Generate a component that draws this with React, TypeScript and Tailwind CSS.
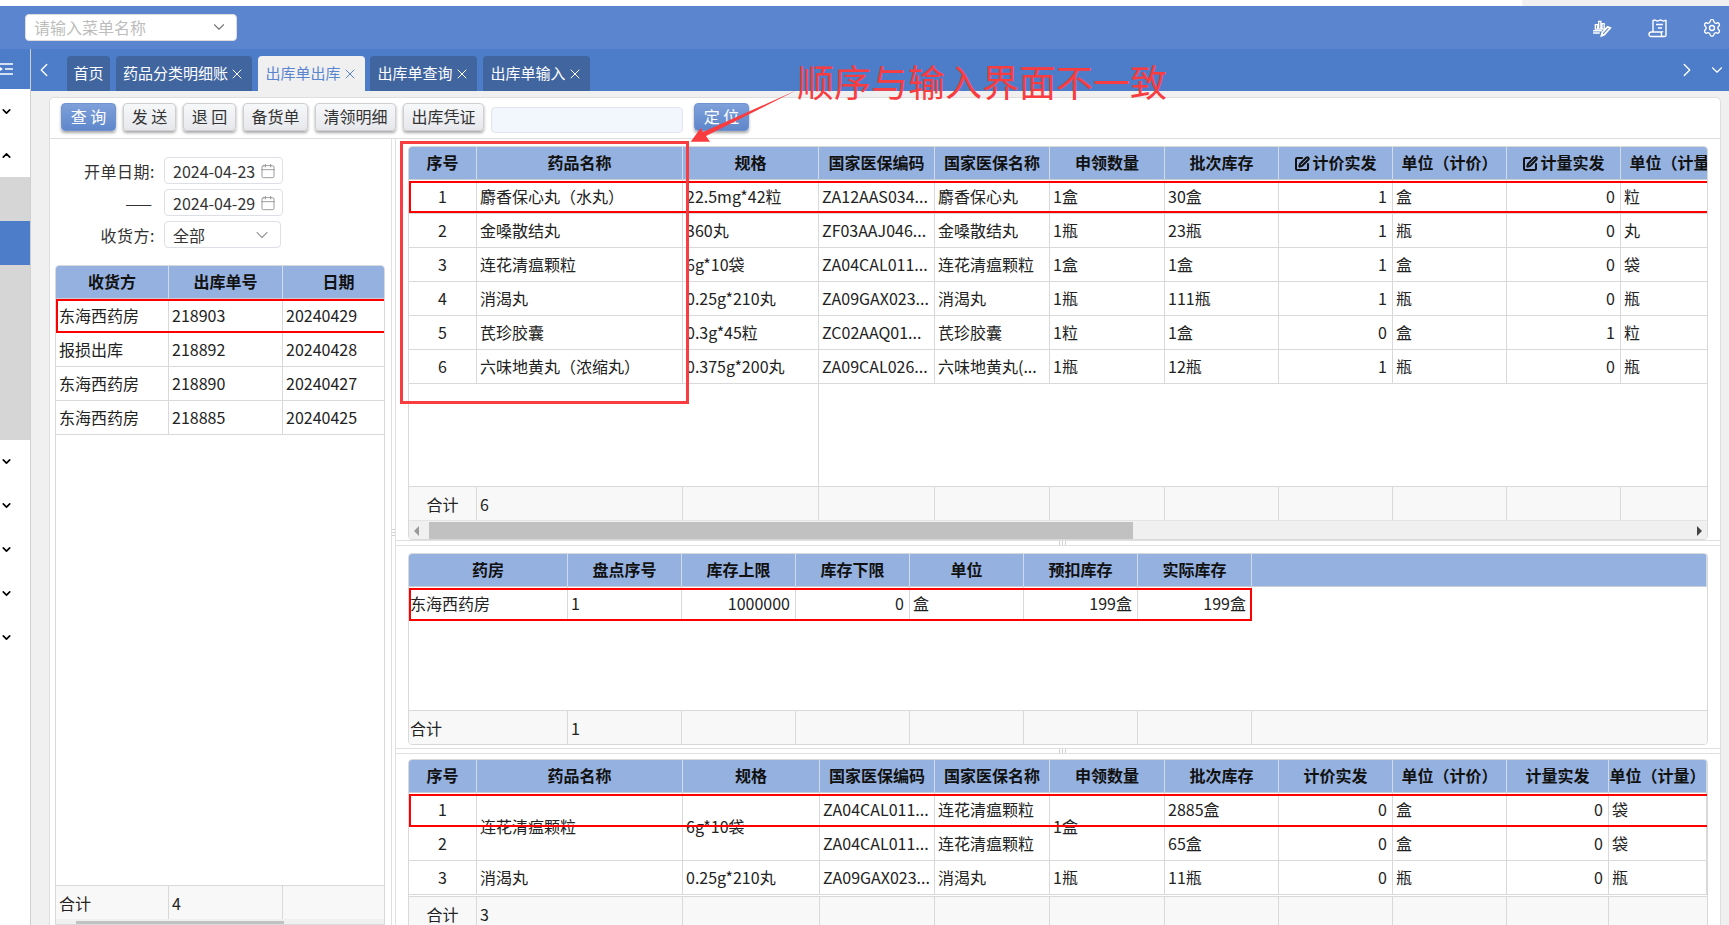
import { Calendar, ChevronDown, ChevronLeft, ChevronRight, ChevronUp, Settings, SquarePen, X } from "lucide-react";

type Col = { w?: number; label: string; align?: "left" | "right" | "center"; edit?: boolean };
type Cell = string | { text: string; span: number } | null;

const alignClass = {
  left: "text-left pl-[3px]",
  right: "text-right pr-[5px]",
  center: "text-center",
};

function Grid(props: { cols: Col[]; rows: Cell[][]; foot: string[]; footAlign?: "left" | "center"; fill?: boolean; tight?: boolean }) {
  const { cols, rows, foot, footAlign = "left", fill, tight } = props;
  const tableW = cols.reduce((sum, c) => sum + (c.w ?? 0), 0);
  const tableStyle = fill ? { width: "100%" } : { width: tableW };

  return (
    <div className="flex h-full min-w-0 flex-col">
      <table className="table-fixed border-separate border-spacing-0" style={tableStyle}>
        <colgroup>
          {cols.map((c, i) => (
            <col key={i} style={c.w ? { width: c.w } : undefined} />
          ))}
        </colgroup>
        <thead>
          <tr>
            {cols.map((c, i) => (
              <th key={i} className="h-[33px] overflow-hidden border-r border-b border-r-[#d5dbe6] border-b-[#c9ced6] bg-[#95b1e0] p-0 pb-[2px] text-center text-[16px] font-bold whitespace-nowrap text-[#111]">
                {c.edit && <SquarePen size={16} strokeWidth={3} className="mr-[2px] inline -translate-y-px" />}
                {c.label}
              </th>
            ))}
          </tr>
        </thead>
        <tbody>
          {rows.map((row, r) => (
            <tr key={r}>
              {row.map((cell, i) => {
                if (cell === null) return null;
                const text = typeof cell === "string" ? cell : cell.text;
                const span = typeof cell === "string" ? 1 : cell.span;
                const isFiller = !cols[i].w && text === "";
                return (
                  <td
                    key={i}
                    rowSpan={span}
                    className={`h-[34px] overflow-hidden p-0 pb-px text-[16px] whitespace-nowrap text-[#222] ${isFiller ? "" : "border-r border-b border-[#d9d9d9]"} ${tight && i === 0 ? "pl-px text-left" : alignClass[cols[i].align ?? "left"]}`}
                  >
                    {text}
                  </td>
                );
              })}
            </tr>
          ))}
        </tbody>
      </table>
      <div className="flex-1" />
      <table className="table-fixed border-separate border-spacing-0" style={tableStyle}>
        <colgroup>
          {cols.map((c, i) => (
            <col key={i} style={c.w ? { width: c.w } : undefined} />
          ))}
        </colgroup>
        <tbody>
          <tr>
            {cols.map((c, i) => (
              <td
                key={i}
                className={`h-[34px] overflow-hidden border-t border-[#d9d9d9] bg-[#f8f8f8] p-0 text-[16px] text-[#222] ${c.w ? "border-r" : ""} ${i === 0 && footAlign === "center" ? "text-center" : tight && i === 0 ? "pl-px text-left" : "pl-[3px] text-left"}`}
              >
                {foot[i]}
              </td>
            ))}
          </tr>
        </tbody>
      </table>
    </div>
  );
}

function Btn({ label, primary, className }: { label: string; primary?: boolean; className: string }) {
  return (
    <button
      className={`h-[28px] shrink-0 rounded-[4px] border pb-[2px] text-[16px] shadow-[0_2px_3px_rgba(0,0,0,0.35)] ${
        primary ? "border-[#6f93cf] bg-linear-to-b from-[#7ea0da] to-[#5f87ca] text-white" : "border-[#cfcfcf] bg-linear-to-b from-[#f7f8fa] to-[#e6e8ec] text-[#333]"
      } ${className}`}
    >
      {label}
    </button>
  );
}

function Tab({ label, active, closable = true, className }: { label: string; active?: boolean; closable?: boolean; className: string }) {
  return (
    <div
      className={`flex h-[35px] shrink-0 items-center justify-center gap-px rounded-t-[4px] pb-[2px] text-[15px] ${
        active ? "bg-[#f0f0f0] text-[#5b85ce]" : "bg-[#41669f] text-white"
      } ${className}`}
    >
      {label}
      {closable && <X size={16} strokeWidth={1.5} className="mt-[2px]" />}
    </div>
  );
}

function HSplit() {
  return (
    <div className="flex h-[6px] justify-center gap-[2px] border-y border-[#e0e0e0] pl-[8px]">
      <span className="h-full w-px bg-[#d0d0d0]" />
      <span className="h-full w-px bg-[#d0d0d0]" />
      <span className="h-full w-px bg-[#d0d0d0]" />
    </div>
  );
}

function SideRow({ up }: { up?: boolean }) {
  return (
    <div className="flex h-[44px] items-center">
      {up ? <ChevronUp size={13} strokeWidth={3} className="text-black" /> : <ChevronDown size={13} strokeWidth={3} className="text-black" />}
    </div>
  );
}

const frozenCols: Col[] = [
  { w: 68, label: "序号", align: "center" },
  { w: 206, label: "药品名称" },
  { w: 136, label: "规格" },
];

const topCols: Col[] = [
  { w: 116, label: "国家医保编码" },
  { w: 115, label: "国家医保名称" },
  { w: 115, label: "申领数量" },
  { w: 114, label: "批次库存" },
  { w: 114, label: "计价实发", align: "right", edit: true },
  { w: 114, label: "单位（计价）" },
  { w: 114, label: "计量实发", align: "right", edit: true },
  { w: 114, label: "单位（计量）" },
];

const frozenRows: Cell[][] = [
  ["1", "麝香保心丸（水丸）", "22.5mg*42粒"],
  ["2", "金嗓散结丸", "360丸"],
  ["3", "连花清瘟颗粒", "6g*10袋"],
  ["4", "消渴丸", "0.25g*210丸"],
  ["5", "芪珍胶囊", "0.3g*45粒"],
  ["6", "六味地黄丸（浓缩丸）", "0.375g*200丸"],
];

const topRows: Cell[][] = [
  ["ZA12AAS034...", "麝香保心丸", "1盒", "30盒", "1", "盒", "0", "粒"],
  ["ZF03AAJ046...", "金嗓散结丸", "1瓶", "23瓶", "1", "瓶", "0", "丸"],
  ["ZA04CAL011...", "连花清瘟颗粒", "1盒", "1盒", "1", "盒", "0", "袋"],
  ["ZA09GAX023...", "消渴丸", "1瓶", "111瓶", "1", "瓶", "0", "瓶"],
  ["ZC02AAQ01...", "芪珍胶囊", "1粒", "1盒", "0", "盒", "1", "粒"],
  ["ZA09CAL026...", "六味地黄丸(...", "1瓶", "12瓶", "1", "瓶", "0", "瓶"],
];

const leftCols: Col[] = [
  { w: 113, label: "收货方" },
  { w: 114, label: "出库单号" },
  { w: 112, label: "日期" },
];

const leftRows: Cell[][] = [
  ["东海西药房", "218903", "20240429"],
  ["报损出库", "218892", "20240428"],
  ["东海西药房", "218890", "20240427"],
  ["东海西药房", "218885", "20240425"],
];

const midCols: Col[] = [
  { w: 159, label: "药房" },
  { w: 114, label: "盘点序号" },
  { w: 114, label: "库存上限", align: "right" },
  { w: 114, label: "库存下限", align: "right" },
  { w: 114, label: "单位" },
  { w: 114, label: "预扣库存", align: "right" },
  { w: 114, label: "实际库存", align: "right" },
  { label: "" },
];

const botCols: Col[] = [
  { w: 68, label: "序号", align: "center" },
  { w: 206, label: "药品名称" },
  { w: 137, label: "规格" },
  { w: 115, label: "国家医保编码" },
  { w: 115, label: "国家医保名称" },
  { w: 115, label: "申领数量" },
  { w: 114, label: "批次库存" },
  { w: 114, label: "计价实发", align: "right" },
  { w: 114, label: "单位（计价）" },
  { w: 102, label: "计量实发", align: "right" },
  { label: "单位（计量）" },
];

const botRows: Cell[][] = [
  ["1", { text: "连花清瘟颗粒", span: 2 }, { text: "6g*10袋", span: 2 }, "ZA04CAL011...", "连花清瘟颗粒", { text: "1盒", span: 2 }, "2885盒", "0", "盒", "0", "袋"],
  ["2", null, null, "ZA04CAL011...", "连花清瘟颗粒", null, "65盒", "0", "盒", "0", "袋"],
  ["3", "消渴丸", "0.25g*210丸", "ZA09GAX023...", "消渴丸", "1瓶", "11瓶", "0", "瓶", "0", "瓶"],
];

export default function App() {
  return (
    <div className="relative flex h-[925px] w-[1729px] flex-col overflow-hidden bg-white font-['Noto_Sans_CJK_SC','Noto_Sans',sans-serif] leading-[22px]">
      {/* window strip */}
      <div className="flex h-[6px] shrink-0 justify-end">
        <div className="w-[207px] bg-[#f0f0f0]" />
      </div>

      {/* header */}
      <div className="flex h-[43px] shrink-0 items-center bg-[#5b85ce] pl-[25px]">
        <div className="flex h-[27px] w-[212px] items-center justify-between rounded-[4px] border border-[#ddd] bg-white px-[8px] pb-[1px] text-[16px] text-[#bdbdbd]">
          请输入菜单名称
          <ChevronDown size={18} strokeWidth={1.5} className="text-[#777]" />
        </div>
        <div className="ml-auto flex items-center gap-[33px] pr-[7px] text-white">
          <svg className="mr-[3px]" width="20" height="20" viewBox="0 0 18 18" fill="none" stroke="currentColor" strokeWidth="1.2">
            <path d="M3 6v4h2V6zM6 3v7h2V3zM9 5v5h2V5zM1 11.5h8M1 13.5h6" />
            <path d="M16.5 9l-5.5 6-2.5 1 .7-2.7L14 8z" strokeWidth="1.6" />
          </svg>
          <svg width="21" height="20" viewBox="0 0 21 20" fill="none" stroke="currentColor" strokeWidth="1.4">
            <path d="M5 14V2.5c1-.7 2-.7 3 0s2 .7 3 0 2-.7 3 0 2 .7 3 0 1 0 1 0V17c0 1-.6 1.5-1.500 1.500H3C1.700 18.500 1 17.500 1 16.500c0-1.500 1-2.500 2.500-2.500H14c-1 1-1 3.500.5 4.500" />
            <path d="M8 6.500h7M10 10h4" />
          </svg>
          <Settings size={20} strokeWidth={1.6} />
        </div>
      </div>

      <div className="flex min-h-0 flex-1">
        {/* sidebar */}
        <div className="flex w-[31px] shrink-0 flex-col border-r border-[#cfcfcf] bg-white">
          <div className="flex h-[40px] shrink-0 items-center bg-[#4d7cc8]">
            <svg width="14" height="14" viewBox="0 0 14 14" stroke="#fff" strokeWidth="1.6">
              <path d="M0 2h13M5 7h8M0 12h13" />
              <path d="M0 5l3 2-3 2z" fill="#fff" stroke="none" />
            </svg>
          </div>
          <SideRow />
          <SideRow up />
          <div className="h-[44px] bg-[#d6d6d6]" />
          <div className="h-[44px] bg-[#4d7cc8]" />
          <div className="h-[175px] bg-[#d6d6d6]" />
          <div className="mt-[-1px]">
            <SideRow />
            <SideRow />
            <SideRow />
            <SideRow />
            <SideRow />
          </div>
        </div>

        <div className="flex min-w-0 flex-1 flex-col">
          {/* tabs */}
          <div className="flex h-[42px] shrink-0 items-end bg-[#4d7cc8] text-white">
            <div className="flex h-full w-[36px] shrink-0 items-center">
              <ChevronLeft size={22} strokeWidth={1.5} className="ml-[2px]" />
            </div>
            <Tab label="首页" closable={false} className="w-[43px]" />
            <Tab label="药品分类明细账" className="ml-[6px] w-[136px]" />
            <Tab label="出库单出库" active className="ml-[6px] w-[107px]" />
            <Tab label="出库单查询" className="ml-[5px] w-[107px]" />
            <Tab label="出库单输入" className="ml-[6px] w-[107px]" />
            <div className="ml-auto flex h-full items-center gap-[10px] pr-[3px]">
              <ChevronRight size={22} strokeWidth={1.5} />
              <ChevronDown size={18} strokeWidth={1.5} />
            </div>
          </div>

          {/* page */}
          <div className="min-h-0 flex-1 bg-[#f0f0f0] pt-[6px] pr-[8px] pl-[18px]">
            <div className="flex h-full flex-col rounded-t-[5px] border border-b-0 border-[#dedede] bg-white">
              {/* toolbar */}
              <div className="flex h-[41px] shrink-0 items-start gap-[7px] border-b border-[#dedede] pt-[5px] pl-[11px]">
                <Btn label="查 询" primary className="w-[55px]" />
                <Btn label="发 送" className="w-[53px]" />
                <Btn label="退 回" className="w-[53px]" />
                <Btn label="备货单" className="w-[65px]" />
                <Btn label="清领明细" className="w-[81px]" />
                <Btn label="出库凭证" className="w-[81px]" />
                <div className="mt-[4px] h-[26px] w-[192px] rounded-[4px] border border-[#e2e6ec] bg-[#f2f7fd]" />
                <Btn label="定 位" primary className="ml-[4px] w-[55px]" />
              </div>

              <div className="flex min-h-0 flex-1">
                {/* left pane */}
                <div className="flex w-[341px] shrink-0 flex-col pr-[6px] pl-[5px]">
                  <div className="flex flex-col gap-[5px] pt-[18px] pb-[17px]">
                    <div className="flex h-[27px] items-center">
                      <span className="w-[100px] text-right text-[16px] tracking-[0.5px] text-[#333]">开单日期:</span>
                      <div className="ml-[9px] flex h-[27px] w-[119px] items-center justify-between rounded-[4px] border border-[#dcdfe6] pr-[6px] pl-[8px] text-[16px] text-[#333]">
                        2024-04-23
                        <Calendar size={16} strokeWidth={1.25} className="text-[#888]" />
                      </div>
                    </div>
                    <div className="flex h-[27px] items-center">
                      <span className="w-[97px] text-right text-[16px] text-[#333]">——</span>
                      <div className="ml-[12px] flex h-[27px] w-[119px] items-center justify-between rounded-[4px] border border-[#dcdfe6] pr-[6px] pl-[8px] text-[16px] text-[#333]">
                        2024-04-29
                        <Calendar size={16} strokeWidth={1.25} className="text-[#888]" />
                      </div>
                    </div>
                    <div className="flex h-[27px] items-center">
                      <span className="w-[100px] text-right text-[16px] tracking-[0.5px] text-[#333]">收货方:</span>
                      <div className="ml-[9px] flex h-[27px] w-[117px] items-center justify-between rounded-[4px] border border-[#dcdfe6] px-[8px] text-[16px] text-[#333]">
                        全部
                        <ChevronDown size={20} strokeWidth={1.25} className="text-[#777]" />
                      </div>
                    </div>
                  </div>

                  <div className="relative flex min-h-0 flex-1 flex-col overflow-hidden rounded-t-[4px] border border-[#d9d9d9]">
                    <div className="min-h-0 flex-1">
                      <Grid cols={leftCols} rows={leftRows} foot={["合计", "4", ""]} />
                    </div>
                    <div className="flex h-[5px] shrink-0 bg-[#f0f0f0] pt-[2px] pl-[20px]">
                      <div className="h-full w-[208px] bg-[#c1c1c1]" />
                    </div>
                    <div className="pointer-events-none absolute top-[33px] right-[-4px] left-0 h-[34px] border-2 border-[#f00]" />
                  </div>
                </div>

                {/* vertical splitter */}
                <div className="flex w-[5px] shrink-0 flex-col justify-center gap-[2px] border-x border-[#e0e0e0]">
                  <span className="h-px w-full bg-[#d0d0d0]" />
                  <span className="h-px w-full bg-[#d0d0d0]" />
                  <span className="h-px w-full bg-[#d0d0d0]" />
                </div>

                {/* right pane */}
                <div className="flex min-w-0 flex-1 flex-col">
                  <div className="px-[12px] pt-[7px]">
                    <div className="relative h-[394px] overflow-hidden rounded-[4px] border border-[#d9d9d9]">
                      <div className="flex h-[373px]">
                        <div className="w-[410px] shrink-0 border-r border-[#d9d9d9]">
                          <Grid cols={frozenCols} rows={frozenRows} foot={["合计", "6", ""]} footAlign="center" />
                        </div>
                        <div className="min-w-0 flex-1 overflow-hidden">
                          <Grid cols={topCols} rows={topRows} foot={["", "", "", "", "", "", "", ""]} />
                        </div>
                      </div>
                      <div className="flex h-[20px] items-center border-t border-[#e4e4e4] bg-[#f0f0f0] px-[5px]">
                        <span className="h-0 w-0 border-y-[5px] border-r-[5px] border-y-transparent border-r-[#999]" />
                        <div className="ml-[10px] h-[17px] w-[704px] bg-[#c1c1c1]" />
                        <span className="ml-auto h-0 w-0 border-y-[5px] border-l-[5px] border-y-transparent border-l-[#444]" />
                      </div>
                      <div className="pointer-events-none absolute top-[34px] right-[-4px] left-0 h-[32px] border-2 border-[#f00]" />
                    </div>
                  </div>

                  <HSplit />

                  <div className="px-[12px] pt-[7px]">
                    <div className="relative h-[192px] overflow-hidden rounded-[4px] border border-[#d9d9d9]">
                      <Grid cols={midCols} rows={[["东海西药房", "1", "1000000", "0", "盒", "199盒", "199盒", ""]]} foot={["合计", "1"]} fill tight />
                      <div className="pointer-events-none absolute top-[34px] left-0 h-[33px] w-[843px] border-2 border-[#f00]" />
                    </div>
                  </div>

                  <div className="mt-[3px]">
                    <HSplit />
                  </div>

                  <div className="min-h-0 flex-1 px-[12px] pt-[5px]">
                    <div className="relative h-[172px] overflow-hidden rounded-t-[4px] border border-[#d9d9d9]">
                      <Grid cols={botCols} rows={botRows} foot={["合计", "3", "", "", "", "", "", "", "", "", ""]} footAlign="center" fill />
                      <div className="pointer-events-none absolute top-[34px] right-[-4px] left-0 h-[33px] border-2 border-[#f00]" />
                    </div>
                  </div>
                </div>
              </div>
            </div>
          </div>
        </div>
      </div>

      {/* annotation drawn over the screenshot */}
      <div className="pointer-events-none absolute top-[141px] left-[400px] h-[263px] w-[289px] border-[3px] border-[#f93c3f]" />
      <svg className="pointer-events-none absolute top-0 left-0" width="1729" height="925">
        <polygon points="797,90 703,132 700.700,128 690.700,141.700 710,141.700 706,136" fill="#f93c3f" />
      </svg>
      <div className="pointer-events-none absolute top-[59px] left-[797px] text-[37px] leading-[44px] whitespace-nowrap text-[#f93c3f]">顺序与输入界面不一致</div>
    </div>
  );
}
